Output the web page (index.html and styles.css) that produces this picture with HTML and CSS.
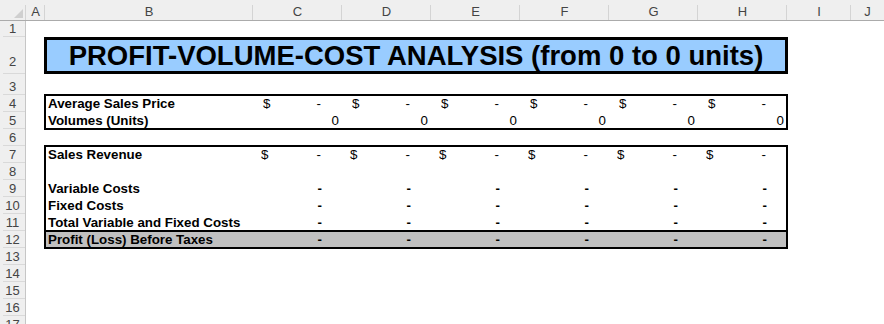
FILE: index.html
```html
<!DOCTYPE html>
<html>
<head>
<meta charset="utf-8">
<link rel="stylesheet" href="styles.css">
</head>
<body>
<div class="sheet">
  <div class="colheads">
    <div class="ch corner"><svg width="9" height="9" viewBox="0 0 9 9"><path d="M9 0V9H0Z" fill="#cfcfcf"/></svg></div>
    <div class="ch w-a">A</div>
    <div class="ch w-b">B</div>
    <div class="ch w-n">C</div>
    <div class="ch w-n">D</div>
    <div class="ch w-n">E</div>
    <div class="ch w-n">F</div>
    <div class="ch w-n">G</div>
    <div class="ch w-n">H</div>
    <div class="ch w-i">I</div>
    <div class="ch w-j">J</div>
  </div>
  <div class="body">
    <div class="rowheads">
      <div class="rh h1">1</div>
      <div class="rh h2">2</div>
      <div class="rh h3">3</div>
      <div class="rh">4</div>
      <div class="rh">5</div>
      <div class="rh">6</div>
      <div class="rh">7</div>
      <div class="rh">8</div>
      <div class="rh">9</div>
      <div class="rh">10</div>
      <div class="rh">11</div>
      <div class="rh">12</div>
      <div class="rh">13</div>
      <div class="rh">14</div>
      <div class="rh">15</div>
      <div class="rh">16</div>
      <div class="rh">17</div>
    </div>
    <div class="cells">
      <div class="blank h1"></div>
      <div class="title">PROFIT-VOLUME-COST ANALYSIS (from 0 to 0 units)</div>
      <div class="blank h3"></div>
      <div class="tbl">
        <div class="row">
          <div class="lbl">Average Sales Price</div>
          <div class="acct"><span>$</span><span>-</span></div>
          <div class="acct"><span>$</span><span>-</span></div>
          <div class="acct"><span>$</span><span>-</span></div>
          <div class="acct"><span>$</span><span>-</span></div>
          <div class="acct"><span>$</span><span>-</span></div>
          <div class="acct"><span>$</span><span>-</span></div>
        </div>
        <div class="row">
          <div class="lbl">Volumes (Units)</div>
          <div class="num">0</div>
          <div class="num">0</div>
          <div class="num">0</div>
          <div class="num">0</div>
          <div class="num">0</div>
          <div class="num">0</div>
        </div>
      </div>
      <div class="blank"></div>
      <div class="tbl">
        <div class="row">
          <div class="lbl">Sales Revenue</div>
          <div class="acct rev"><span>$</span><span>-</span></div>
          <div class="acct rev"><span>$</span><span>-</span></div>
          <div class="acct rev"><span>$</span><span>-</span></div>
          <div class="acct rev"><span>$</span><span>-</span></div>
          <div class="acct rev"><span>$</span><span>-</span></div>
          <div class="acct rev"><span>$</span><span>-</span></div>
        </div>
        <div class="row"></div>
        <div class="row">
          <div class="lbl">Variable Costs</div>
          <div class="dash">-</div><div class="dash">-</div><div class="dash">-</div>
          <div class="dash">-</div><div class="dash">-</div><div class="dash">-</div>
        </div>
        <div class="row">
          <div class="lbl">Fixed Costs</div>
          <div class="dash">-</div><div class="dash">-</div><div class="dash">-</div>
          <div class="dash">-</div><div class="dash">-</div><div class="dash">-</div>
        </div>
        <div class="row">
          <div class="lbl">Total Variable and Fixed Costs</div>
          <div class="dash">-</div><div class="dash">-</div><div class="dash">-</div>
          <div class="dash">-</div><div class="dash">-</div><div class="dash">-</div>
        </div>
        <div class="row total">
          <div class="lbl">Profit (Loss) Before Taxes</div>
          <div class="dash">-</div><div class="dash">-</div><div class="dash">-</div>
          <div class="dash">-</div><div class="dash">-</div><div class="dash">-</div>
        </div>
      </div>
    </div>
  </div>
</div>
</body>
</html>
```
FILE: styles.css
```css
body {
  margin: 0;
  background: #fff;
  font-family: "Liberation Sans", Arial, sans-serif;
  overflow: hidden;
}
.sheet {
  width: 884px;
  height: 324px;
  overflow: hidden;
}
.colheads {
  display: flex;
  height: 21px;
  box-sizing: border-box;
  background: #efefef;
  border-bottom: 1px solid #ababab;
}
.ch {
  flex: none;
  display: flex;
  justify-content: center;
  align-items: center;
  padding-top: 3px;
  box-sizing: border-box;
  font-size: 13px;
  color: #444;
  background-image: linear-gradient(#d4d4d4, #d4d4d4);
  background-repeat: no-repeat;
  background-size: 1px 15px;
  background-position: right 0 bottom 0;
}
.corner {
  width: 26px;
  justify-content: flex-end;
  align-items: flex-end;
  padding: 0 3px 2px 0;
}
.corner svg { display: block; }
.w-a { width: 19px; }
.w-b { width: 208px; }
.w-n { width: 89px; }
.w-i { width: 64px; }
.w-j { flex: 1; background-image: none; }
.body {
  display: flex;
}
.rowheads {
  flex: none;
  width: 26px;
  box-sizing: border-box;
  background: #efefef;
  border-right: 1px solid #c6c6c6;
}
.rh {
  height: 17px;
  display: flex;
  justify-content: center;
  align-items: flex-end;
  line-height: 17px;
  font-size: 13px;
  color: #444;
  box-sizing: border-box;
  background-image: linear-gradient(#d9d9d9, #d9d9d9);
  background-repeat: no-repeat;
  background-size: 22px 1px;
  background-position: right 0 bottom 0;
}
.rh.h1 { height: 16px; }
.rh.h2 { height: 37px; padding-bottom: 4px; }
.rh.h3 { height: 21px; }
.cells {
  flex: 1;
  padding-left: 19px;
}
.blank { height: 17px; }
.blank.h1 { height: 16px; }
.blank.h3 { height: 21px; }
.title {
  width: 744px;
  margin-left: -1px;
  height: 37px;
  box-sizing: border-box;
  background: #99ccff;
  outline: 3px solid #000;
  outline-offset: -3px;
  display: flex;
  align-items: center;
  justify-content: center;
  font-weight: bold;
  font-size: 27.5px;
  color: #000;
  white-space: nowrap;
}
.tbl {
  width: 742px;
  outline: 2px solid #000;
  outline-offset: -1px;
}
.row {
  display: grid;
  grid-template-columns: 208px repeat(6, 89px);
  height: 17px;
  line-height: 17px;
  font-size: 13.33px;
  color: #000;
}
.lbl {
  font-weight: bold;
  padding-left: 3px;
  white-space: nowrap;
}
.acct {
  display: flex;
  justify-content: space-between;
  padding: 0 21px 0 10px;
  font-family: "Liberation Sans Narrow", "Liberation Sans", Arial, sans-serif;
}
.acct.rev { padding-left: 8px; }
.num {
  text-align: right;
  padding-right: 3px;
  font-family: "Liberation Sans Narrow", "Liberation Sans", Arial, sans-serif;
}
.dash {
  text-align: right;
  padding-right: 20px;
  font-weight: bold;
  font-family: "Liberation Sans Narrow", "Liberation Sans", Arial, sans-serif;
}
.row.total {
  background: #c0c0c0;
  box-shadow: 0 -1px 0 #000, inset 0 1px 0 #000;
}
```
